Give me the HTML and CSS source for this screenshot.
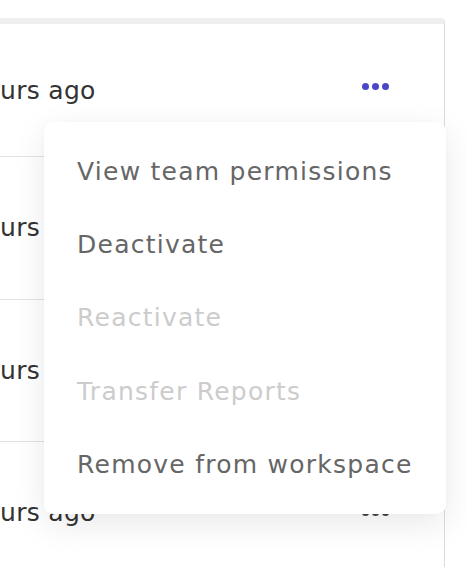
FILE: index.html
```html
<!DOCTYPE html>
<html lang="en">
<head>
<meta charset="utf-8">
<title>Members</title>
<link rel="stylesheet" href="styles.css">
</head>
<body>
<div class="page">
  <div class="card">
    <div class="row row-first">
      <span class="cell-time">urs ago</span>
      <button class="more more-active" aria-label="More actions"><span class="dot"></span><span class="dot"></span><span class="dot"></span></button>
    </div>
    <div class="row">
      <span class="cell-time">urs ago</span>
      <button class="more" aria-label="More actions"><span class="dot"></span><span class="dot"></span><span class="dot"></span></button>
    </div>
    <div class="row">
      <span class="cell-time">urs ago</span>
      <button class="more" aria-label="More actions"><span class="dot"></span><span class="dot"></span><span class="dot"></span></button>
    </div>
    <div class="row">
      <span class="cell-time">urs ago</span>
      <button class="more" aria-label="More actions"><span class="dot"></span><span class="dot"></span><span class="dot"></span></button>
    </div>
  </div>
  <ul class="menu">
    <li class="menu-item">View team permissions</li>
    <li class="menu-item">Deactivate</li>
    <li class="menu-item is-disabled">Reactivate</li>
    <li class="menu-item is-disabled">Transfer Reports</li>
    <li class="menu-item">Remove from workspace</li>
  </ul>
</div>
</body>
</html>
```

FILE: styles.css
```css
* { box-sizing: border-box; }
html, body {
  margin: 0;
  padding: 0;
  background: #ffffff;
  overflow: hidden;
}
body {
  font-family: "DejaVu Sans", "Liberation Sans", sans-serif;
  font-size: 25px;
  color: #333333;
}
.page {
  position: relative;
  width: 467px;
  height: 567px;
  padding-top: 18px;
}
.card {
  width: 445px;
  border-top: 6px solid #efefef;
  border-right: 1px solid #dcdcdc;
  border-top-right-radius: 4px;
}
.row {
  display: flex;
  align-items: center;
  justify-content: space-between;
  height: 142.5px;
  border-bottom: 1px solid #e2e2e2;
  padding-right: 55px;
}
.row-first { height: 133px; }
.cell-time {
  color: #333333;
  white-space: nowrap;
  line-height: 1;
  letter-spacing: 0.3px;
}
.more {
  display: flex;
  gap: 3px;
  border: 0;
  background: none;
  padding: 0;
  margin: 0;
}
.more-active { margin-bottom: 8px; }
.dot {
  width: 7px;
  height: 7px;
  border-radius: 50%;
  background: #444444;
}
.more-active .dot { background: #4b46c8; }
.menu {
  position: absolute;
  left: 44px;
  top: 122px;
  width: 402px;
  height: 392px;
  margin: 0;
  padding: 13px 0;
  list-style: none;
  background: #ffffff;
  border-radius: 9px;
  box-shadow: 0 10px 34px rgba(0, 0, 0, 0.09), 0 0 6px rgba(0, 0, 0, 0.02);
}
.menu-item {
  display: flex;
  align-items: center;
  height: 73.2px;
  padding-left: 33px;
  color: #666666;
  white-space: nowrap;
  letter-spacing: 1.25px;
}
.menu-item.is-disabled { color: #cccccc; }
```
